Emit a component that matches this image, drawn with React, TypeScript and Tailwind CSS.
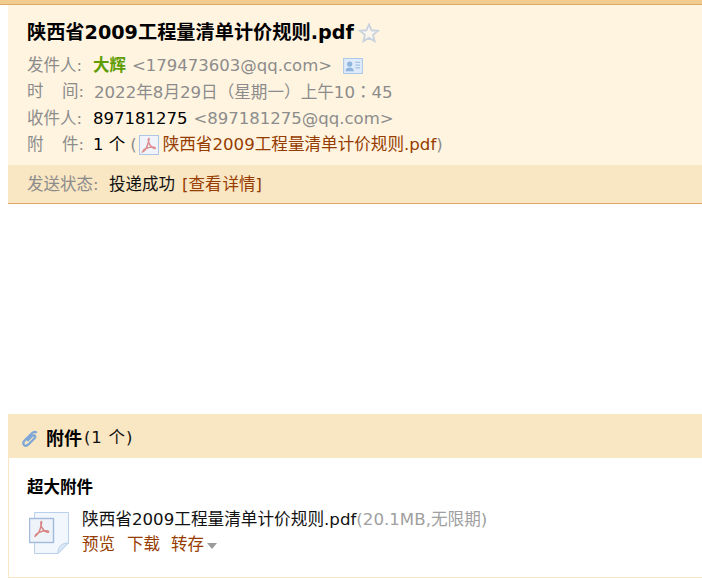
import React from 'react';

function PdfGlyph({ className }: { className?: string }) {
  return (
    <svg viewBox="0 0 20 20" className={className} fill="none">
      <rect x="0.5" y="0.5" width="19" height="19" fill="#f0f3fa" stroke="#aec5e4" />
      <path
        d="M10 3.500c-1 0-.8 3 .4 5.500 1 2 2.600 3.600 4.600 4.400 1 .4 1.800-.4.600-1-1.600-.6-5-.2-8.600 1.200-1.500.6-3 2.400-3.300 3.200 1-.4 2.500-1.800 3.600-3.800 1.300-2.400 3.200-9.500 2.700-9.500z"
        stroke="#dd8f8f"
        strokeWidth="1.600"
      />
    </svg>
  );
}

function LargePdf() {
  return (
    <svg viewBox="0 0 40 42" className="w-[40px] h-[42px] shrink-0">
      <path d="M5.500 .5H39.500V31L29 41.500H5.500z" fill="#f1f7fd" stroke="#b9d0ea" />
      <path d="M29 41.500C29 35 32 31 39.500 31L29 41.500z" fill="#dde8f5" stroke="#b9d0ea" />
      <rect x="0.500" y="6.500" width="24" height="24" fill="#eef2f9" stroke="#a3bbdb" strokeWidth="1.400" />
      <path
        d="M12.500 9.500c-1 0-.9 3.600.4 6.200 1.200 2.300 3.100 4 5.400 4.500 1.300.3 1.800-.8.500-1.200-1.800-.5-5.800 0-9.400 1.600-1.800.9-3.200 2.700-3.300 3.600 1.200-.4 2.700-2.200 4-4.500 1.400-2.700 3-10.200 2.400-10.200z"
        fill="none"
        stroke="#d98585"
        strokeWidth="1.500"
      />
    </svg>
  );
}

export default function App() {
  return (
    <div className="w-[702px] h-[578px] overflow-hidden bg-white text-[16.5px] text-[#111] font-['DejaVu_Sans','Noto_Sans_CJK_SC',sans-serif]">
      {/* Mail header */}
      <div className="h-[5px] bg-[#f2cb8e] border-b border-[#dca765]" />
      <div className="ml-2 bg-[#fff4e0]">
        <div className="pl-[19px] pt-[12px] pb-[7px]">
          <div className="flex items-center h-[30px] pt-[1px]">
            <h1 className="text-[19.2px] font-bold leading-[30px] text-black">陕西省2009工程量清单计价规则.pdf</h1>
            <svg viewBox="0 0 24 22" className="w-[22px] h-[20px] ml-[4px]" fill="#fbf6ec" stroke="#c9d3df" strokeWidth="2">
              <path d="M12 1.500l2.800 6.500 7 .6-5.300 4.500 1.600 6.900-6.100-3.600-6.100 3.600 1.600-6.900-5.300-4.500 7-.6z" />
            </svg>
          </div>
          <div className="flex items-center h-[26px] text-[#8c8c8c] mt-[6px]">
            <span className="w-[66px]">发件人:</span>
            <span className="font-bold text-[#5e9c00]">大辉</span>
            <span className="ml-[6px]">&lt;179473603@qq.com&gt;</span>
            <svg viewBox="0 0 21 17" className="w-[20px] h-[16px] ml-[11px]">
              <rect x="0.500" y="0.500" width="20" height="16" fill="#dfeafa" stroke="#a9c5e6" />
              <circle cx="7" cy="6.500" r="2.800" fill="#8fb4de" />
              <path d="M2.500 14c.3-3 2.200-4 4.500-4s4.200 1 4.500 4z" fill="#8fb4de" />
              <path d="M13 4.500h5M13 7.500h5M13 10.500h5" stroke="#8fb4de" />
            </svg>
          </div>
          <div className="flex items-center h-[27px] text-[#8c8c8c]">
            <span className="w-[67px] flex justify-between pr-[10px]"><span>时</span><span>间:</span></span>
            <span className="whitespace-pre text-[16.6px]">
              2022年8月29日（星期一）上午10<span className="font-['Noto_Sans_CJK_TC']">：</span>45
            </span>
          </div>
          <div className="flex items-center h-[26px] text-[#8c8c8c]">
            <span className="w-[66px]">收件人:</span>
            <span className="text-black">897181275</span>
            <span className="ml-[6px]">&lt;897181275@qq.com&gt;</span>
          </div>
          <div className="flex items-center h-[26px] text-[#8c8c8c]">
            <span className="w-[66px] flex justify-between pr-[9px]"><span>附</span><span>件:</span></span>
            <span className="text-black">1 个</span>
            <span className="ml-[5px]">(</span>
            <PdfGlyph className="w-[20px] h-[20px] ml-[2px] mr-[4px]" />
            <a className="text-[#963c00] text-[16.6px]">陕西省2009工程量清单计价规则.pdf</a>
            <span>)</span>
          </div>
        </div>
        <div className="flex items-center h-[39px] pt-[2px] pl-[19px] bg-[#f9e6c3] border-b border-[#dca765]">
          <span className="text-[#8c8c8c] w-[82px]">发送状态:</span>
          <span>投递成功</span>
          <a className="flex ml-[7px] text-[#963c00]">
            <span>[查看</span>
            <span className="ml-[1px]">详情]</span>
          </a>
        </div>
      </div>

      {/* Body */}
      <div className="h-[210px]" />

      {/* Attachments */}
      <div className="ml-2 -mr-4 border-l border-b border-[#f9e6c3]">
        <div className="flex items-center h-[44px] -ml-px pl-[13px] pt-[5px] bg-[#f9e6c3]">
          <svg viewBox="0 0 20 20" className="w-[19px] h-[20px]" fill="none" stroke="#7ea6d6" strokeWidth="2.400">
            <path d="M16.500 3.500c-1.500-1.500-3.500-1-5 .5l-7.500 7.500c-1.500 1.500-2 3.500-.8 4.800 1.300 1.300 3.300.7 4.800-.8l6-6c1-1 1.200-2.200.5-3s-2-.5-3 .5l-5 5" />
          </svg>
          <span className="ml-[6px] text-[18px] font-bold text-black">附件</span>
          <span className="ml-[2px] tracking-[0.8px]">(1 个)</span>
        </div>
        <div className="pl-[18px] pt-[20px] h-[119px]">
          <div className="font-bold leading-[20px] text-black">超大附件</div>
          <div className="flex mt-[14px]">
            <div className="ml-[2px]">
              <LargePdf />
            </div>
            <div className="ml-[13px] -mt-[5px]">
              <div className="leading-[25px] text-[16.65px]">
                陕西省2009工程量清单计价规则.pdf<span className="text-[#a0a0a0]">(20.1MB,无限期)</span>
              </div>
              <div className="flex items-center leading-[25px] text-[#963c00]">
                <span>预览</span>
                <span className="ml-[12px]">下载</span>
                <span className="ml-[11px]">转存</span>
                <span className="ml-[3px] w-0 h-0 border-x-[5px] border-x-transparent border-t-[6px] border-t-[#9a9a9a] mt-[2px]" />
              </div>
            </div>
          </div>
        </div>
      </div>
    </div>
  );
}
